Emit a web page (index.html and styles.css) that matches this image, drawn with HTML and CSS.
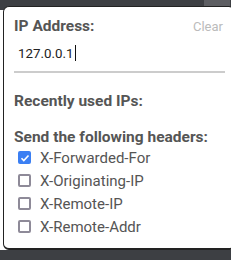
FILE: index.html
```html
<!doctype html>
<html><head>
    <meta charset="utf-8">
    <link rel="stylesheet" href="styles.css">
</head>
<body>
    <div class='popup'>
        <div class='head'>
            <span class='label'>IP Address:</span>
            <span class='clear'>Clear</span>
        </div>
        <div class='ip-field'><span>127.0.0.1</span><span class='caret'></span></div>

        <div class='label recent'>Recently used IPs:</div>

        <div class='label send'>Send the following headers:</div>
        <div class='headers'>
            <label class='row'><span class='box checked'></span>X-Forwarded-For</label>
            <label class='row'><span class='box'></span>X-Originating-IP</label>
            <label class='row'><span class='box'></span>X-Remote-IP</label>
            <label class='row'><span class='box'></span>X-Remote-Addr</label>
        </div>
    </div>
</body></html>
```

FILE: styles.css
```css
body {
    margin: 0;
    overflow: hidden;
    font-family: Roboto, "Liberation Sans", sans-serif;
    background:
        linear-gradient(90deg, transparent 0 204px, #5d5e62 204px 230px, transparent 230px) 0 0 / 100% 6px no-repeat,
        linear-gradient(#3d3f43 0 10px, #fff 10px);
}

.popup {
    margin: 6px 0 0 3px;
    width: 211px;
    padding: 10px 9px 10px 10px;
    background: #fff;
    border: 1px solid #222;
    border-bottom-width: 2px;
    border-radius: 6px;
}

.head {
    display: flex;
    justify-content: space-between;
    align-items: baseline;
}

.label {
    font-size: 15.5px;
    line-height: 18px;
    font-weight: bold;
    color: #555;
}

.clear {
    font-size: 13px;
    color: #bbb;
    margin-right: 2px;
}

.ip-field {
    margin-top: 10px;
    padding: 0 0 8px 4px;
    height: 18px;
    line-height: 18px;
    font-size: 13.33px;
    color: #222;
    border-bottom: 2px solid #ccc;
}

.caret {
    display: inline-block;
    width: 1px;
    height: 16px;
    margin-left: 1px;
    background: #111;
    vertical-align: -3px;
}

.recent {
    margin-top: 19px;
}

.send {
    margin-top: 18px;
}

.row {
    display: flex;
    align-items: center;
    height: 23px;
    font-size: 15px;
    color: #555;
}

.box {
    box-sizing: border-box;
    width: 13px;
    height: 13px;
    margin: 0 9px 0 4px;
    border: 2px solid #8e8a98;
    border-radius: 2px;
}

.box.checked {
    border: none;
    background: #3b7ff3 no-repeat center / 10px 10px url("data:image/svg+xml,%3Csvg xmlns='http://www.w3.org/2000/svg' viewBox='0 0 10 10'%3E%3Cpath d='M1.5 5.2l2.3 2.3 4.7-5' fill='none' stroke='white' stroke-width='1.6'/%3E%3C/svg%3E");
}
```
